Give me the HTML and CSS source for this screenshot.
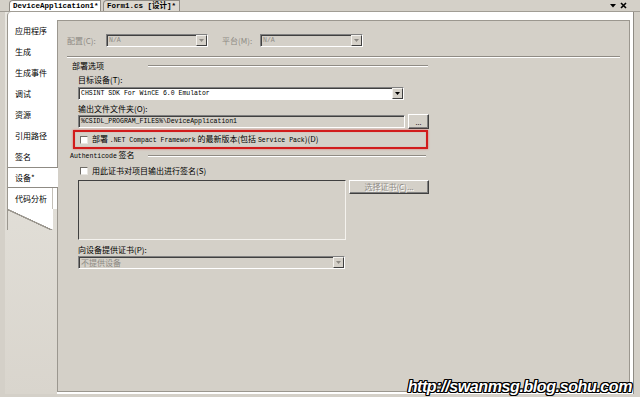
FILE: index.html
```html
<!DOCTYPE html>
<html lang="zh-CN">
<head>
<meta charset="UTF-8" />
<title>DeviceApplication1 - 设备</title>
<link rel="stylesheet" href="styles.css">
</head>
<body>
<div class="strip">
  <div class="tab active">DeviceApplication1*</div>
  <div class="tab">Form1.cs [设计]*</div>
  <div class="strip-tools">
    <svg width="6" height="4" viewBox="0 0 6 4"><path d="M0 0h6L3 3.5z" fill="#000"/></svg>
    <svg width="7" height="7" viewBox="0 0 7 7"><path d="M1 1l5 5M6 1L1 6" stroke="#000" stroke-width="1.6"/></svg>
  </div>
</div>

<div class="doc">
  <div class="nav">
    <ul class="nav-list">
      <li>应用程序</li>
      <li>生成</li>
      <li>生成事件</li>
      <li>调试</li>
      <li>资源</li>
      <li>引用路径</li>
      <li>签名</li>
      <li class="sel">设备*</li>
      <li class="last">代码分析</li>
    </ul>
    <div class="nav-tail"></div>
  </div>

  <div class="main">
    <div class="panel">
      <div class="top-row">
        <span class="lbl dis cfg">配置(C):</span>
        <div class="combo dis cfg-box"><span class="en">N/A</span><i class="drop"><svg width="5" height="3" viewBox="0 0 5 3"><path d="M0 0h5L2.5 3z"/></svg></i></div>
        <span class="lbl dis plat">平台(M):</span>
        <div class="combo dis plat-box"><span class="en">N/A</span><i class="drop"><svg width="5" height="3" viewBox="0 0 5 3"><path d="M0 0h5L2.5 3z"/></svg></i></div>
      </div>
      <div class="etched"></div>

      <div class="group">
        <div class="ghead deploy-head"><span>部署选项</span><i class="rule"></i></div>

        <div class="lbl gap4">目标设备(T):</div>
        <div class="combo target"><span class="en">CHSINT SDK For WinCE 6.0 Emulator</span><i class="drop"><svg width="5" height="3" viewBox="0 0 5 3"><path d="M0 0h5L2.5 3z"/></svg></i></div>

        <div class="lbl gap4">输出文件文件夹(O):</div>
        <div class="out-row">
          <div class="field"><span class="en">%CSIDL_PROGRAM_FILES%\DeviceApplication1</span></div>
          <div class="btn dots">...</div>
        </div>

        <div class="highlight">
          <i class="check"></i>
          <span>部署 <span class="en">.NET Compact Framework</span> 的最新版本(包括 <span class="en">Service Pack</span>)(D)</span>
        </div>

        <div class="ghead auth-head"><span><span class="en">Authenticode</span> 签名</span><i class="rule"></i></div>

        <div class="check-row">
          <i class="check"></i>
          <span>用此证书对项目输出进行签名(S)</span>
        </div>

        <div class="cert-row">
          <div class="cert-box"></div>
          <div class="btn dis cert-btn">选择证书(C)...</div>
        </div>

        <div class="lbl gap5">向设备提供证书(P):</div>
        <div class="combo dis provide"><span>不提供设备</span><i class="drop"><svg width="5" height="3" viewBox="0 0 5 3"><path d="M0 0h5L2.5 3z"/></svg></i></div>
      </div>
    </div>
  </div>
</div>

<div class="watermark">http://swanmsg.blog.sohu.com</div>
</body>
</html>
```

FILE: styles.css
```css
/* Reset & base */
* {
  box-sizing: border-box;
}
html, body {
  margin: 0;
  padding: 0;
  width: 640px;
  height: 397px;
  overflow: hidden;
}
body {
  position: relative;
  background: #d4d0c8;
  color: #000;
  font-family: "Noto Sans CJK SC", "Liberation Sans", sans-serif;
  font-size: 8px;
  line-height: 10px;
}
.en {
  font-family: "Liberation Mono", monospace;
  font-size: 6.5px;
}
ul {
  list-style: none;
  margin: 0;
  padding: 0;
}

/* Document tab strip */
.strip {
  height: 12px;
  display: flex;
  align-items: flex-end;
  padding-left: 9px;
  border-bottom: 1px solid #a19d95;
}
.tab {
  height: 11px;
  padding: 0 3px;
  margin-right: 2px;
  font-family: "Liberation Mono", "Noto Sans CJK SC", monospace;
  font-size: 7.5px;
  font-weight: bold;
  line-height: 10px;
  white-space: nowrap;
  background: #dcd8d0;
  border: 1px solid #8f8b84;
  border-bottom: none;
  border-top-left-radius: 4px;
}
.tab.active {
  width: 92px;
  background: #fff;
}
.strip-tools {
  margin-left: auto;
  margin-right: 13px;
  align-self: center;
  display: flex;
  align-items: center;
  gap: 4px;
}

/* Document body */
.doc {
  display: flex;
  margin: 0 6px 0 5px;
  height: 382px;
}
.nav {
  width: 52px;
  background: linear-gradient(#e9e7e1, #d9d5cd);
}
.nav-list {
  margin-left: 2px;
  padding-top: 8px;
  background: #fff;
  border-left: 1px solid #9b978f;
  border-top-left-radius: 4px;
}
.nav-list li {
  height: 21px;
  line-height: 21px;
  padding-left: 7px;
  white-space: nowrap;
}
.nav-list li.sel {
  border-top: 1px solid #8f8b84;
  border-bottom: 1px solid #8f8b84;
  line-height: 19px;
  margin-right: -1px;
  position: relative;
  background: #fff;
}
.nav-list li.last {
  margin-right: 4px;
  border-right: 1px solid #c4c0b8;
}
.nav-tail {
  margin-left: 2px;
  width: 46px;
  height: 21px;
  border-left: 1px solid #9b978f;
  background: linear-gradient(to bottom left, #fff 49%, #9b978f 50%, #9b978f 53%, transparent 54%);
}
.main {
  flex: 1;
  background: #fff;
  padding: 8px 3px 2px 0;
  border-right: 1px solid #8f8b84;
}
.panel {
  height: 100%;
  background: #d4d0c8;
  border: 1px solid #9b978f;
  padding-top: 13px;
}

/* Controls */
.lbl {
  height: 10px;
  white-space: nowrap;
}
.dis {
  color: #8d8a84;
}
.gap4 { margin-top: 4px; }
.gap5 { margin-top: 5px; }

.combo {
  height: 13px;
  display: flex;
  align-items: center;
  padding-left: 2px;
  background: #fff;
  border: 1px solid;
  border-color: #808080 #fff #fff #808080;
  box-shadow: inset 1px 1px #404040;
  white-space: nowrap;
}
.combo.dis {
  background: #d4d0c8;
}
.drop {
  margin-left: auto;
  width: 11px;
  height: 11px;
  display: flex;
  align-items: center;
  justify-content: center;
  background: #d4d0c8;
  border: 1px solid;
  border-color: #f4f2ee #404040 #404040 #f4f2ee;
}
.drop path {
  fill: #000;
}
.combo.dis .drop path {
  fill: #8d8a84;
}

.top-row {
  display: flex;
  align-items: center;
  padding-left: 9px;
}
.cfg { width: 39px; }
.cfg-box { width: 102px; }
.plat { width: 38px; margin-left: 14px; }
.plat-box { width: 103px; }

.etched {
  height: 2px;
  margin: 9px 9px 0 9px;
  border-top: 1px solid #8f8b84;
  border-bottom: 1px solid #fff;
}

.group {
  display: flex;
  flex-direction: column;
  align-items: flex-start;
  padding-left: 20px;
}
.ghead {
  height: 10px;
  width: 356px;
  display: flex;
  align-items: center;
  justify-content: space-between;
  white-space: nowrap;
}
.ghead .rule {
  height: 2px;
  border-top: 1px solid #8f8b84;
  border-bottom: 1px solid #fff;
}
.deploy-head {
  margin: 3px 0 0 -6px;
}
.deploy-head .rule { width: 280px; }
.auth-head {
  margin: 2px 0 0 -8px;
}
.auth-head .rule { width: 278px; }

.target {
  width: 326px;
  margin-top: 2px;
}
.out-row {
  height: 15px;
  display: flex;
  align-items: center;
}
.field {
  width: 327px;
  height: 13px;
  padding-left: 2px;
  display: flex;
  align-items: center;
  background: #d4d0c8;
  border: 1px solid;
  border-color: #808080 #fff #fff #808080;
  box-shadow: inset 1px 1px #404040;
  white-space: nowrap;
}
.btn {
  display: flex;
  align-items: center;
  justify-content: center;
  background: #d4d0c8;
  border: 1px solid;
  border-color: #fff #404040 #404040 #fff;
  box-shadow: inset -1px -1px #808080;
  white-space: nowrap;
}
.btn.dis {
  text-shadow: 1px 1px #fff;
}
.dots {
  width: 21px;
  height: 15px;
  margin-left: 3px;
  font-size: 7px;
}

.check {
  display: block;
  width: 8px;
  height: 8px;
  flex: none;
  background: #fff;
  border: 1px solid;
  border-color: #6f6c66 #e8e6e0 #e8e6e0 #6f6c66;
}
.highlight {
  margin: 1px 0 0 -5px;
  width: 355px;
  height: 19px;
  display: flex;
  align-items: center;
  gap: 4px;
  padding-left: 5px;
  border: 2px solid #d11b1b;
  box-shadow: 0 0 2px rgba(230, 40, 40, 0.6), inset 0 0 1px rgba(230, 40, 40, 0.5);
  white-space: nowrap;
}
.check-row {
  margin: 5px 0 0 2px;
  height: 10px;
  display: flex;
  align-items: center;
  gap: 4px;
  white-space: nowrap;
}

.cert-row {
  margin-top: 4px;
  display: flex;
  align-items: flex-start;
}
.cert-box {
  width: 268px;
  height: 60px;
  background: #d4d0c8;
  border: 1px solid;
  border-color: #404040 #f4f2ee #f4f2ee #404040;
}
.cert-btn {
  width: 80px;
  height: 14px;
  margin-left: 3px;
}
.provide {
  width: 267px;
  margin-top: 1px;
}

/* Watermark overlay */
.watermark {
  position: absolute;
  right: 8px;
  bottom: 1px;
  font-family: "Liberation Sans", sans-serif;
  font-size: 16px;
  font-weight: bold;
  font-style: italic;
  letter-spacing: -0.4px;
  line-height: 18px;
  color: #fff;
  text-shadow: 1px 1px 0 #000, -1px -1px 0 #000, 1px -1px 0 #000, -1px 1px 0 #000, 1px 0 0 #000, -1px 0 0 #000, 0 1px 0 #000, 0 -1px 0 #000;
}
```
